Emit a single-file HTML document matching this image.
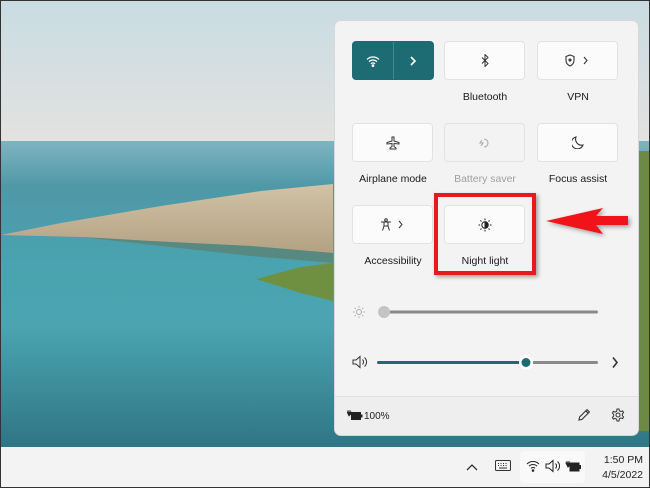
<!DOCTYPE html>
<html><head><meta charset="utf-8"><style>
*{margin:0;padding:0;box-sizing:border-box}
body{width:650px;height:488px;overflow:hidden;position:relative;font-family:"Liberation Sans",sans-serif;background:#333}
#bg{position:absolute;left:1px;top:1px;width:648px;height:446px}
.panel{position:absolute;left:334px;top:20px;width:305px;height:416px;background:#f3f3f3;border:1px solid #d8d8d8;border-radius:7px;overflow:hidden}
.btn{position:absolute;width:81px;height:39px;background:#fbfbfb;border:1px solid #e2e2e2;border-radius:4px;display:flex;align-items:center;justify-content:center}
.lbl{position:absolute;width:100px;text-align:center;font-size:10.5px;color:#1a1a1a}
.footer{position:absolute;left:0;top:375px;width:305px;height:41px;background:#eeeeee;border-top:1px solid #e0e0e0}
.tb{position:absolute;left:1px;top:447px;width:648px;height:40px;background:#f3f3f3}
</style></head><body>
<svg id="bg" viewBox="0 0 648 446" preserveAspectRatio="none">
<defs>
<linearGradient id="sky" x1="0" y1="0" x2="0" y2="1"><stop offset="0" stop-color="#c8dce2"/><stop offset="1" stop-color="#e3e2e0"/></linearGradient>
<linearGradient id="wat" x1="0" y1="0" x2="0" y2="1"><stop offset="0" stop-color="#7fb4bf"/><stop offset=".15" stop-color="#4f98a8"/><stop offset=".4" stop-color="#4aa3b0"/><stop offset=".6" stop-color="#4ba5b1"/><stop offset="1" stop-color="#2f7585"/></linearGradient>
<linearGradient id="gr" x1="0" y1="0" x2="0" y2="1"><stop offset="0" stop-color="#d2c3a6"/><stop offset="1" stop-color="#b3a182"/></linearGradient>
</defs>
<rect width="648" height="142" fill="url(#sky)"/>
<rect y="140" width="648" height="306" fill="url(#wat)"/>
<polygon points="0,234 60,222 160,205 260,190 332,183 332,252 250,245 150,240 80,236" fill="url(#gr)"/>
<polygon points="80,236 150,240 250,245 332,252 332,262 250,255" fill="#5d7f6c" opacity=".7"/>
<polygon points="255,278 300,266 332,262 332,300 300,292" fill="#6f9040"/>
<rect x="638" y="150" width="10" height="280" fill="#6c8a45"/>
</svg>
<div class="panel">
 <div class="btn" style="left:17px;top:20px;background:#1d6b73;border-color:#1d6b73;width:82px;justify-content:flex-start">
  <div style="width:41px;height:100%;display:flex;align-items:center;justify-content:center;border-right:1px solid #3f8a90"><svg width="14" height="12" viewBox="0 0 14 12" fill="none" stroke="#fff" stroke-width="1.2"><path d="M1 4.5a8.5 8.5 0 0 1 12 0M3 6.7a5.5 5.5 0 0 1 8 0M5 8.9a2.5 2.5 0 0 1 4 0"/><circle cx="7" cy="10.6" r=".8" fill="#fff"/></svg></div>
  <div style="width:40px;display:flex;justify-content:center"><svg width="8" height="12" viewBox="0 0 8 12" fill="none" stroke="#fff" stroke-width="1.6"><path d="M2 2l4 4-4 4"/></svg></div>
 </div>
 <div class="btn" style="left:109px;top:20px"><svg width="8" height="13" viewBox="0 0 8 13" fill="none" stroke="#333" stroke-width="1"><path d="M1 3.5l6 6-3 3V.5l3 3-6 6"/></svg></div>
 <div class="btn" style="left:202px;top:20px"><svg width="26" height="13" viewBox="0 0 26 13" fill="none" stroke="#333" stroke-width="1.1"><path d="M5 1l4 1.5v4c0 2.5-2 4.5-4 5.5-2-1-4-3-4-5.5v-4z"/><circle cx="5" cy="6" r="1" fill="#333"/><path d="M19 3l3 3.5-3 3.5"/></svg></div>
 <div class="lbl" style="left:100px;top:70px">Bluetooth</div>
 <div class="lbl" style="left:193px;top:70px">VPN</div>
 <div class="btn" style="left:17px;top:102px"><svg width="14" height="14" viewBox="0 0 14 14" fill="none" stroke="#333" stroke-width="1"><path d="M6 1h2v4l5 1.5v1.5l-5-.5v3l2 1.5v1H4v-1l2-1.5v-3l-5 .5V6.5L6 5z"/></svg></div>
 <div class="btn" style="left:109px;top:102px;background:#f3f3f3"><svg width="14" height="12" viewBox="0 0 14 12" fill="none" stroke="#aaa" stroke-width="1.1"><path d="M6 2a4 4 0 1 1 0 8"/><path d="M4 3l-2 3h3l-2 3" /></svg></div>
 <div class="btn" style="left:202px;top:102px"><svg width="12" height="13" viewBox="0 0 12 13" fill="none" stroke="#333" stroke-width="1.1"><path d="M4 1a6 6 0 1 0 7 8A6 6 0 0 1 4 1z"/></svg></div>
 <div class="lbl" style="left:8px;top:152px">Airplane mode</div>
 <div class="lbl" style="left:100px;top:152px;color:#a0a0a0">Battery saver</div>
 <div class="lbl" style="left:193px;top:152px">Focus assist</div>
 <div class="btn" style="left:17px;top:184px"><svg width="26" height="13" viewBox="0 0 26 13" fill="none" stroke="#333" stroke-width="1"><circle cx="6" cy="2" r="1.3"/><path d="M1 4h10M4 4v4l-1.5 4.5M8 4v4l1.5 4.5M4 8h4"/><path d="M19 3l3 3.5-3 3.5"/></svg></div>
 <div class="btn" style="left:109px;top:184px"><svg width="14" height="14" viewBox="0 0 14 14" fill="none" stroke="#222" stroke-width="1"><circle cx="7" cy="7" r="3.2"/><path d="M7 3.8a3.2 3.2 0 0 1 0 6.4z" fill="#222"/><path d="M7 .5v1.6M7 11.9v1.6M.5 7h1.6M11.9 7h1.6M2.4 2.4l1.1 1.1M10.5 10.5l1.1 1.1M2.4 11.6l1.1-1.1M10.5 3.5l1.1-1.1"/></svg></div>
 <div class="lbl" style="left:8px;top:234px">Accessibility</div>
 <div class="lbl" style="left:100px;top:234px">Night light</div>
 <svg style="position:absolute;left:16px;top:283px" width="280" height="100" viewBox="0 0 280 100">
  <g fill="none" stroke="#aaa" stroke-width="1"><circle cx="8" cy="8" r="2.5"/><path d="M8 2v1.5M8 12.5V14M2 8h1.5M12.5 8H14M3.8 3.8l1 1M11.2 11.2l1 1M3.8 12.2l1-1M11.2 4.8l1-1"/></g>
  <rect x="33" y="6.5" width="214" height="3" rx="1.5" fill="#8a8a8a"/>
  <circle cx="33" cy="8" r="6" fill="#c4c4c4"/>
  <g fill="none" stroke="#333" stroke-width="1"><path d="M2 56h3l4-3.5v11L5 60H2z"/><path d="M11.5 55.5a3.5 3.5 0 0 1 0 5M13.5 53.5a6 6 0 0 1 0 9"/></g>
  <rect x="26" y="57" width="149" height="3" rx="1.5" fill="#1d6b73"/>
  <rect x="175" y="57" width="72" height="3" rx="1.5" fill="#8a8a8a"/>
  <circle cx="175" cy="58.5" r="7" fill="#fff"/><circle cx="175" cy="58.5" r="4.5" fill="#1d6b73"/>
  <path d="M262 53.5l4 5-4 5" fill="none" stroke="#333" stroke-width="1.6"/>
 </svg>
 <div class="footer">
  <svg style="position:absolute;left:12px;top:12px" width="16" height="12" viewBox="0 0 16 12"><path d="M1 3v-2M3 3v-2M0 3h4v2l-2 2z" stroke="#222" fill="#222" stroke-width=".8"/><rect x="4" y="3" width="10" height="8" fill="#222"/><rect x="14" y="5.5" width="1.5" height="3" fill="#222"/></svg>
  <div style="position:absolute;left:29px;top:14px;font-size:10px;color:#222">100%</div>
  <svg style="position:absolute;left:242px;top:11px" width="14" height="14" viewBox="0 0 14 14" fill="none" stroke="#333" stroke-width="1.1"><path d="M2 12l.6-3L10 1.6l2.4 2.4L5 11.4z M8.8 2.8l2.4 2.4"/></svg>
  <svg style="position:absolute;left:276px;top:11px" width="14" height="14" viewBox="0 0 14 14" fill="none" stroke="#333" stroke-width="1"><path d="M6 1h2l.4 1.8 1.5.8 1.7-.7 1 1.7-1.3 1.3v1.7l1.3 1.3-1 1.7-1.7-.7-1.5.8L8 13H6l-.4-1.8-1.5-.8-1.700.7-1-1.7 1.3-1.3V6.4L1.4 5.1l1-1.7 1.7.7 1.5-.8z"/><circle cx="7" cy="7" r="2"/></svg>
 </div>
</div>
<div style="position:absolute;left:434px;top:193px;width:102px;height:82px;border:4px solid #e8191d;box-shadow:2px 2px 4px rgba(0,0,0,.35)"></div>
<svg style="position:absolute;left:540px;top:204px;filter:drop-shadow(2px 2px 2px rgba(0,0,0,.35))" width="95" height="36" viewBox="0 0 95 36"><polygon points="6,17 63,4 56,12 88,12 88,21 56,21 63,30" fill="#f0141a"/></svg>
<div class="tb">
 <svg style="position:absolute;left:465px;top:16px" width="12" height="8" viewBox="0 0 12 8" fill="none" stroke="#333" stroke-width="1.3"><path d="M1 7l5-5 5 5"/></svg>
 <svg style="position:absolute;left:494px;top:13px" width="16" height="11" viewBox="0 0 16 11" fill="none" stroke="#333" stroke-width="1"><rect x=".5" y=".5" width="15" height="10" rx="1"/><path d="M3 3.5h1M5.5 3.5h1M8 3.5h1M10.5 3.5h1M3 5.5h1M5.5 5.5h1M8 5.5h1M10.5 5.5h1M4 8h8"/></svg>
 <div style="position:absolute;left:519px;top:4px;width:65px;height:32px;background:#f9f9f9;border-radius:4px"></div>
 <svg style="position:absolute;left:525px;top:12px" width="56" height="14" viewBox="0 0 56 14" fill="none" stroke="#222" stroke-width="1"><path d="M1 5a8.5 8.5 0 0 1 12 0M3 7.2a5.5 5.5 0 0 1 8 0M5 9.4a2.5 2.5 0 0 1 4 0"/><circle cx="7" cy="11.5" r=".8" fill="#222"/><path d="M20 5h3l4-3.5v11L23 9h-3z"/><path d="M29.5 4.5a3.5 3.5 0 0 1 0 5M31.5 2.5a6 6 0 0 1 0 9"/><path d="M41 4v-2M43 4v-2M40 4h4v2l-2 2z" fill="#222"/><rect x="44" y="4" width="9" height="8" fill="#222"/><rect x="53" y="6.5" width="1.5" height="3" fill="#222"/></svg>
 <div style="position:absolute;left:598px;top:7px;font-size:10.5px;color:#222;text-align:right;width:44px">1:50 PM</div>
 <div style="position:absolute;left:592px;top:22px;font-size:10.5px;color:#222;text-align:right;width:50px">4/5/2022</div>
</div>
</body></html>
